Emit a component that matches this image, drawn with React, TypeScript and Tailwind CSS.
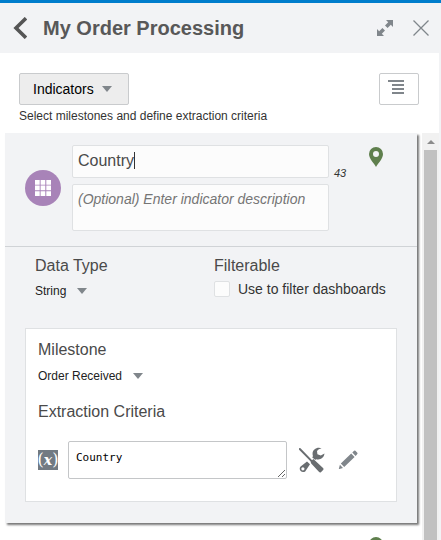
import type { ReactNode } from "react";

function Caret({ className = "" }: { className?: string }) {
  return (
    <svg viewBox="0 0 10 6" className={`h-[6px] w-[10px] shrink-0 fill-[#80868b] ${className}`} aria-hidden="true">
      <path d="M0 0h10L5 6z" />
    </svg>
  );
}

function Pin() {
  return (
    <svg viewBox="0 0 14 20" className="block h-5 w-[14px] fill-[#5f7f4d]" aria-hidden="true">
      <path fillRule="evenodd" d="M7 0a7 7 0 0 0-7 7c0 5 5 9 7 13 2-4 7-8 7-13a7 7 0 0 0-7-7zm0 4a3 3 0 1 1 0 6 3 3 0 0 1 0-6z" />
    </svg>
  );
}

function InlineSelect({ id, options }: { id: string; options: string[] }) {
  return (
    <span className="relative inline-flex items-center">
      <select id={id} className="h-5 appearance-none bg-transparent pr-5 text-xs text-[#222]">
        {options.map((o) => (
          <option key={o}>{o}</option>
        ))}
      </select>
      <Caret className="pointer-events-none absolute right-0" />
    </span>
  );
}

function FieldLabel({ htmlFor, children }: { htmlFor: string; children: ReactNode }) {
  return (
    <label htmlFor={htmlFor} className="block text-base leading-5 text-[#4a4a4a]">
      {children}
    </label>
  );
}

function Header() {
  return (
    <header className="flex h-[53px] shrink-0 items-center border-t-[3px] border-[#007dcc] bg-[#f2f3f5] pr-3 pl-[13px]">
      <button type="button" aria-label="Back">
        <svg viewBox="0 0 14 22" className="h-[22px] w-[14px] fill-none stroke-[#555] stroke-[3.6]" aria-hidden="true">
          <path d="M13 1.2 3 11l10 9.8" />
        </svg>
      </button>
      <h1 className="ml-4 flex-1 text-xl leading-6 font-bold whitespace-nowrap text-[#585858]">My Order Processing</h1>
      <button type="button" aria-label="Expand" className="mr-5">
        <svg viewBox="0 0 16 16" className="block size-4 fill-[#80868b]" aria-hidden="true">
          <path d="M9 0h7v7l-2.2-2.2-3.2 3.2L8 5.4l3.2-3.2zM0 9l2.2 2.2L5.4 8 8 10.6l-3.2 3.2L7 16H0z" />
        </svg>
      </button>
      <button type="button" aria-label="Close">
        <svg viewBox="0 0 16 16" className="block size-4 fill-none stroke-[#80868b] stroke-[1.3]" aria-hidden="true">
          <path d="M.5.5l15 15M15.5.5l-15 15" />
        </svg>
      </button>
    </header>
  );
}

function Toolbar() {
  return (
    <div className="shrink-0 pt-5 pr-5 pb-2 pl-[19px]">
      <div className="flex items-center justify-between">
        <button type="button" aria-haspopup="menu" className="flex h-8 w-[110px] items-center justify-between rounded-xs border border-[#c9cbcd] bg-[#ededed] pr-4 pl-[13px] text-sm text-black">
          Indicators
          <Caret />
        </button>
        <button type="button" aria-label="List options" className="flex h-8 w-10 items-center rounded-xs border border-[#c9cbcd] bg-white pl-2">
          <svg viewBox="0 0 16 14" className="mb-1 h-[14px] w-4 fill-[#80868b]" aria-hidden="true">
            <path d="M0 0h16v2H0zM4 4h12v2H4zM4 8h12v2H4zM4 12h12v2H4z" />
          </svg>
        </button>
      </div>
      <p className="pt-[3px] text-xs leading-[17px] text-[#333]">Select milestones and define extraction criteria</p>
    </div>
  );
}

function IndicatorSummary() {
  return (
    <div className="flex items-start border-b border-[#d0d3d6] pt-3 pr-[34px] pb-[15px] pl-5">
      <span className="flex size-9 shrink-0 items-center justify-center self-center rounded-full bg-[#a883b8]">
        <svg viewBox="0 0 16 16" className="size-4 fill-white" aria-hidden="true">
          <path d="M0 0h4.7v4.7H0zM5.6 0h4.7v4.7H5.6zM11.3 0H16v4.7h-4.7zM0 5.6h4.7v4.7H0zM5.6 5.6h4.7v4.7H5.6zM11.3 5.6H16v4.7h-4.7zM0 11.3h4.7V16H0zM5.6 11.3h4.7V16H5.6zM11.3 11.3H16V16h-4.7z" />
        </svg>
      </span>
      <div className="ml-[11px] min-w-0 flex-1">
        <div className="relative">
          <input aria-label="Indicator name" defaultValue="Country" className="block h-[33px] w-full rounded-xs border border-[#dfe1e3] bg-[#fcfcfc] px-[5px] pb-[2px] text-base text-[#4a4a4a]" />
          <span className="absolute top-[7px] left-[62px] h-[17px] w-px bg-[#333]" />
        </div>
        <textarea
          aria-label="Indicator description"
          placeholder="(Optional) Enter indicator description"
          className="mt-[6px] block h-[47px] w-full resize-none rounded-xs border border-[#dfe1e3] bg-[#fcfcfc] px-[5px] py-1 text-sm italic placeholder:text-[#757575]"
        />
      </div>
      <span className="mt-5 ml-[5px] w-[35px] text-[11px] leading-4 text-[#333] italic">43</span>
      <button type="button" aria-label="Milestone location" className="mt-[2px]">
        <Pin />
      </button>
    </div>
  );
}

function ExtractionPanel() {
  return (
    <section className="mx-5 border border-[#dfe1e3] bg-white px-3 pt-[11px] pb-[22px]">
      <FieldLabel htmlFor="milestone">Milestone</FieldLabel>
      <div className="mt-[6px] flex">
        <InlineSelect id="milestone" options={["Order Received"]} />
      </div>
      <div className="mt-4">
        <FieldLabel htmlFor="criteria">Extraction Criteria</FieldLabel>
      </div>
      <div className="mt-[19px] flex items-center">
        <span className="flex size-5 shrink-0 items-center justify-center overflow-hidden bg-[#727a82] font-['DejaVu_Serif',serif] text-base leading-5 text-white">
          (<i className="text-sm font-bold">x</i>)
        </span>
        <textarea
          id="criteria"
          defaultValue="Country"
          className="ml-[10px] block h-[38px] min-w-0 flex-1 resize rounded-xs border border-[#c4c6c8] bg-white px-[7px] py-2 font-['DejaVu_Sans_Mono',monospace] text-[11px] leading-4 text-black"
        />
        <button type="button" aria-label="Configure expression" className="ml-3">
          <svg viewBox="0 0 26 26" className="block size-[26px]" aria-hidden="true">
            <path d="M.8 2 12.2 13.6" className="stroke-[#696d70] stroke-2" strokeLinecap="round" />
            <path d="M11.5 14.6 14.4 12l9.9 9.2q.6 1-.2 1.8l-2.2 2.2q-1 .6-1.8-.2L12.2 16.6z" className="fill-[#696d70]" />
            <path d="M13.8 9.4 17 12.2" className="stroke-[#696d70] stroke-2" />
            <path fillRule="evenodd" className="fill-[#696d70]" d="M22.6 1.3C18.2-.6 13 2.4 13.6 7.6l.4 1.8 3.2 2.8c4 1 7.8-1.2 8.3-5.6l-3.7 1.8-3.4-1.2-.4-3.2 1.8-1.8zM8 14.4 1.6 19.4c-2.6 3 1 7.2 4.6 5L11 17.2zM3.9 20.2a1.6 1.6 0 1 1 0 3.2 1.6 1.6 0 0 1 0-3.2z" />
          </svg>
        </button>
        <button type="button" aria-label="Edit expression" className="mr-[26px] ml-[13px]">
          <svg viewBox="0 0 20 20" className="block size-5 fill-[#80868b]" aria-hidden="true">
            <path d="M13.2 3.6 16.6 7 6.2 17 2.8 13.6zM14.3 2.6l1.8-1.8q.6-.6 1.3 0l1.9 1.9q.6.6 0 1.3L17.6 5.9zM1.9 14.8 5 17.9l-3.6 1.2q-.8 0-.5-.7z" />
          </svg>
        </button>
      </div>
    </section>
  );
}

function IndicatorCard() {
  return (
    <article className="mx-[5px] bg-[#f2f3f5] pb-[21px] shadow-[2px_2px_2px_0_#777]">
      <IndicatorSummary />
      <div className="grid grid-cols-[179px_1fr] pt-[9px] pr-5 pb-[27px] pl-[30px]">
        <div>
          <FieldLabel htmlFor="dataType">Data Type</FieldLabel>
          <div className="mt-[5px] flex">
            <InlineSelect id="dataType" options={["String"]} />
          </div>
        </div>
        <div>
          <h2 className="text-base leading-5 text-[#4a4a4a]">Filterable</h2>
          <label className="mt-[5px] flex items-center gap-2 text-sm leading-4 whitespace-nowrap text-[#333]">
            <input type="checkbox" className="size-4 appearance-none rounded-xs border border-[#dfe1e3] bg-[#fcfcfc]" />
            Use to filter dashboards
          </label>
        </div>
      </div>
      <ExtractionPanel />
    </article>
  );
}

export default function App() {
  return (
    <div className="flex h-screen flex-col overflow-hidden bg-white font-['Liberation_Sans',Arial,sans-serif]">
      <Header />
      <main className="flex min-h-0 flex-1 flex-col border-r-2 border-[#f2f3f5]">
        <Toolbar />
        <div className="flex min-h-0 flex-1">
          <div className="min-w-0 flex-1 overflow-hidden">
            <IndicatorCard />
            <div className="flex justify-end pt-[14px] pr-[39px]">
              <Pin />
            </div>
          </div>
          <div className="flex w-[17px] shrink-0 flex-col items-center bg-[#f1f1f1]" aria-hidden="true">
            <svg viewBox="0 0 8 4" className="mt-[7px] mb-[6px] h-1 w-2 shrink-0 fill-[#8b8b8b]">
              <path d="M0 4h8L4 0z" />
            </svg>
            <div className="w-[13px] flex-1 bg-[#c1c1c1]" />
          </div>
        </div>
      </main>
    </div>
  );
}
